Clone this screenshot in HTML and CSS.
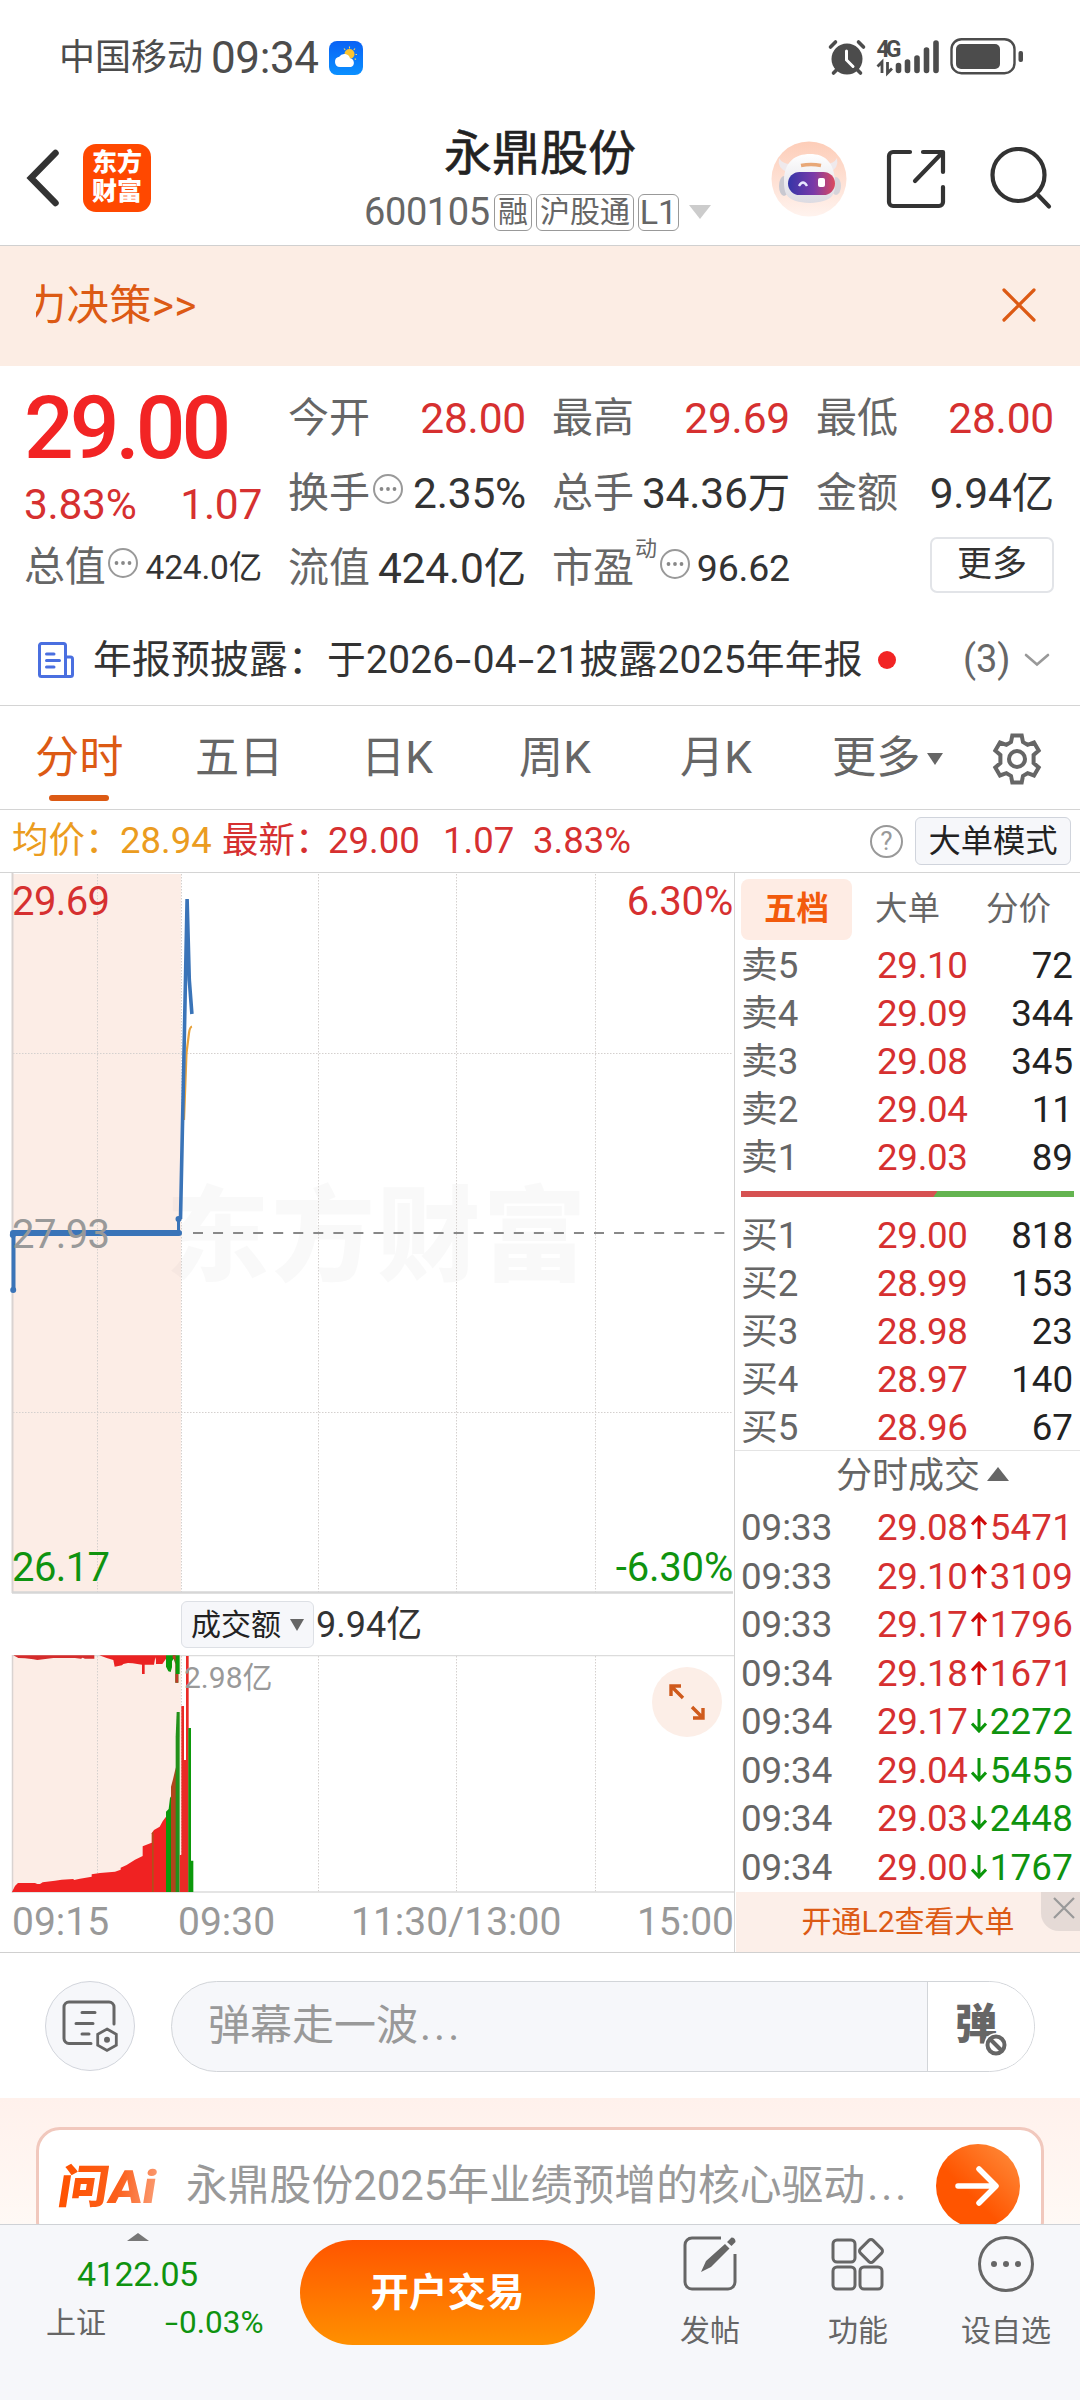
FILE: index.html
```html
<!DOCTYPE html>
<html lang="zh-CN">
<head>
<meta charset="utf-8">
<title>永鼎股份 600105</title>
<link rel="stylesheet" href="styles.css">
</head>
<body>
<svg width="0" height="0" class="defs">
  <defs>
    <symbol id="dots" viewBox="0 0 32 32"><circle cx="16" cy="16" r="14" fill="none" stroke="#999" stroke-width="2"/><circle cx="9.5" cy="16" r="1.9" fill="#888"/><circle cx="16" cy="16" r="1.9" fill="#888"/><circle cx="22.5" cy="16" r="1.9" fill="#888"/></symbol>
    <symbol id="up" viewBox="0 0 16 24"><path d="M8 24V3M1 9.500L8 2l7 7.500" fill="none" stroke="#d00a0a" stroke-width="3"/></symbol>
    <symbol id="down" viewBox="0 0 16 24"><path d="M8 0v21M1 14.500L8 22l7-7.500" fill="none" stroke="#0a960a" stroke-width="3"/></symbol>
  </defs>
</svg>

<div class="status">
  <span class="carrier">中国移动</span><span class="clock">09:34</span>
  <svg class="weather" width="34" height="34" viewBox="0 0 34 34">
    <defs><linearGradient id="sky" x1="0" y1="0" x2="0" y2="1"><stop offset="0" stop-color="#0a62f5"/><stop offset="1" stop-color="#0a90ff"/></linearGradient></defs>
    <rect width="34" height="34" rx="8" fill="url(#sky)"/>
    <circle cx="20.500" cy="13" r="5" fill="#fcc42e"/>
    <path d="M20.500 5.500v2M15 7.500l1.200 1.500M26 7.500L24.800 9M28 13.500h-1.500M27 18.500l-1.300-.8" stroke="#fcd45e" stroke-width="1.100"/>
    <path d="M11 26a5.200 5.200 0 0 1-.8-10.300A6 6 0 0 1 21 17.200a4.600 4.600 0 0 1 1 8.800z" fill="#fff"/>
  </svg>
  <svg class="indicators" width="200" height="52" viewBox="0 -6 200 52">
    <g fill="#4c4c4c" stroke="#4c4c4c" stroke-linecap="round">
      <circle cx="21" cy="21" r="15.500" stroke="none"/>
      <path d="M4.500 9l5-5M37.500 9l-5-5M7.500 35l4-4M34.500 35l-4-4" stroke-width="3.600"/>
      <path d="M20.500 13v9l6.500 6.500" fill="none" stroke="#fff" stroke-width="3"/>
    </g>
    <text x="50.500" y="18.500" class="net" textLength="25">4G</text>
    <path d="M56 35V24l-4.500 4.500M61.500 24v11l4.500-4.500" fill="none" stroke="#4c4c4c" stroke-width="2.800"/>
    <g stroke="#4c4c4c" stroke-width="5.600" stroke-linecap="round"><path d="M72.500 27.500v5M81.500 24v8.500M91 20v12.500M100.500 12v20.500M110 5v27.500"/></g>
    <rect x="125.500" y="1.200" width="63" height="34" rx="10" fill="none" stroke="#4c4c4c" stroke-width="2.400"/>
    <rect x="130" y="6" width="44" height="25" rx="5" fill="#4c4c4c"/>
    <rect x="192.500" y="13" width="4.500" height="11" rx="2" fill="#4c4c4c"/>
  </svg>
</div>

<header class="header">
  <svg class="back" width="34" height="58" viewBox="0 0 34 58"><path d="M29.500 4L5 29l24.500 25" fill="none" stroke="#333" stroke-width="6.500" stroke-linecap="round"/></svg>
  <div class="logo"><span>东方</span><span>财富</span></div>
  <div class="title">
    <h1>永鼎股份</h1>
    <div class="sub"><span class="code">600105</span><i>融</i><i>沪股通</i><i>L1</i><b class="tri"></b></div>
  </div>
  <svg class="robot" width="76" height="76" viewBox="0 0 76 76">
    <defs>
      <linearGradient id="rb" x1="0" y1="0" x2="0" y2="1"><stop offset="0" stop-color="#fdcdb8"/><stop offset="1" stop-color="#fff3ee"/></linearGradient>
      <linearGradient id="rf"><stop offset="0" stop-color="#3536a8"/><stop offset=".55" stop-color="#7a3aa8"/><stop offset="1" stop-color="#dc4a5e"/></linearGradient>
      <linearGradient id="rh" x1="0" y1="0" x2="0" y2="1"><stop offset="0" stop-color="#fff"/><stop offset="1" stop-color="#dcdbe2"/></linearGradient>
    </defs>
    <circle cx="38" cy="38" r="37.500" fill="url(#rb)"/>
    <path d="M8 17q-2 10 8 14l6-8q-10 1-14-6zM66 17q2 10-7 14l-6-8q9 1 13-6z" fill="#efe9ec"/>
    <ellipse cx="13" cy="45" rx="5" ry="10" fill="#c9c8d0"/><ellipse cx="65" cy="45" rx="5" ry="9" fill="#d6d4da"/>
    <path d="M13 40C13 21 24 13 39 13s24 8 25 27c1 14-3 21-25 22-24-1-26-9-26-22z" fill="url(#rh)"/>
    <path d="M30 24.500q10-2 20 0" stroke="#e8a878" stroke-width="3.500" fill="none"/>
    <rect x="17" y="31" width="47" height="23" rx="11.500" fill="url(#rf)"/>
    <path d="M28 45q4-7 8 0" fill="none" stroke="#e8e8ff" stroke-width="2.400"/><rect x="47" y="37" width="7" height="9" rx="2" fill="#fff"/>
  </svg>
  <svg class="share" width="62" height="62" viewBox="0 0 62 62"><path d="M24 4H7a4 4 0 0 0-4 4v46a4 4 0 0 0 4 4h46a4 4 0 0 0 4-4V39M37 4h20v20M56 5L29 33" fill="none" stroke="#333" stroke-width="4.200" stroke-linecap="round" stroke-linejoin="round"/></svg>
  <svg class="search" width="64" height="64" viewBox="0 0 64 64"><circle cx="29.500" cy="28" r="26" fill="none" stroke="#333" stroke-width="4.200"/><path d="M48 47l12 12.500" stroke="#333" stroke-width="4.200" stroke-linecap="round"/></svg>
</header>

<div class="banner">
  <div class="marquee"><span>力决策&gt;&gt;</span></div>
  <svg width="34" height="34" viewBox="0 0 34 34"><path d="M2 2l30 30M32 2L2 32" stroke="#dc5a14" stroke-width="3.200" stroke-linecap="round"/></svg>
</div>

<section class="quote">
  <div class="lead">
    <div class="price">29.00</div>
    <div class="pair chg"><span>3.83%</span><span>1.07</span></div>
    <div class="pair"><label>总值</label><svg class="dot"><use href="#dots"/></svg><span class="v s34">424.0亿</span></div>
  </div>
  <div class="col">
    <div class="pair"><label>今开</label><span class="v red">28.00</span></div>
    <div class="pair"><label>换手</label><svg class="dot"><use href="#dots"/></svg><span class="v">2.35%</span></div>
    <div class="pair"><label>流值</label><span class="v">424.0亿</span></div>
  </div>
  <div class="col">
    <div class="pair"><label>最高</label><span class="v red">29.69</span></div>
    <div class="pair"><label>总手</label><span class="v">34.36万</span></div>
    <div class="pair"><label>市盈</label><sup>动</sup><svg class="dot"><use href="#dots"/></svg><span class="v s38">96.62</span></div>
  </div>
  <div class="col">
    <div class="pair"><label>最低</label><span class="v red">28.00</span></div>
    <div class="pair"><label>金额</label><span class="v">9.94亿</span></div>
    <div class="pair end"><button class="more">更多</button></div>
  </div>
</section>

<div class="news">
  <svg class="doc" width="38" height="38" viewBox="0 0 38 38"><path d="M28.500 35.500H4.500a2 2 0 0 1-2-2V4.500a2 2 0 0 1 2-2h22a2 2 0 0 1 2 2zM28.500 16h5a2 2 0 0 1 2 2v15.500a2 2 0 0 1-2 2h-5M9.500 13h7.500M9.500 19.500h13M9.500 26h7.500" fill="none" stroke="#4a6fe0" stroke-width="3" stroke-linecap="round"/></svg>
  <span class="headline">年报预披露：于2026<u>-</u>04<u>-</u>21披露2025年年报</span><i class="reddot"></i><span class="count">(3)</span>
  <svg class="chev" width="26" height="14" viewBox="0 0 26 14"><path d="M2 2l11 9.500L24 2" fill="none" stroke="#999" stroke-width="2.600" stroke-linecap="round"/></svg>
</div>

<nav class="tabs">
  <span class="t1 on">分时</span><span>五日</span><span>日K</span><span>周K</span><span>月K</span><span>更多</span><b></b>
  <svg class="gear" width="54" height="54" viewBox="0 0 54 54"><path d="M22.300 3.500h9.400l1.300 6.600 4.600 2.700 6.400-2.300 4.700 8.100-5.100 4.400v8l5.100 4.400-4.700 8.100-6.400-2.300-4.600 2.700-1.300 6.600h-9.400L21 43.900l-4.600-2.700-6.400 2.300-4.700-8.100 5.100-4.400v-8l-5.100-4.400 4.700-8.100 6.400 2.300 4.600-2.700z" fill="none" stroke="#666" stroke-width="4"/><circle cx="27" cy="27" r="8" fill="none" stroke="#666" stroke-width="4"/></svg>
</nav>

<div class="info">
  <span class="avg">均价：</span><span class="avg">28.94</span><span class="red">最新：</span><span class="red">29.00</span><span class="red">1.07</span><span class="red">3.83%</span>
  <i class="help">?</i><button class="mode">大单模式</button>
</div>

<main class="board">
  <div class="charts">
    <svg class="pricechart" width="734" height="721" viewBox="0 0 734 721">
      <rect x="13" y="1" width="168" height="718" fill="#fcede6"/>
      <text x="166" y="400" class="mark" textLength="420">东方财富</text>
      <g class="grid"><path d="M97.500 1v718M181.500 1v718M318.500 1v718M456.500 1v718M595.500 1v718M13 180.500h720M13 539.500h720"/></g>
      <path d="M12.500 0v720" stroke="#d9d3d1" stroke-width="2"/>
      <path d="M12 719.500h721" stroke="#d6d6d6" stroke-width="2.500"/>
      <path d="M193 360h540" stroke="#888" stroke-width="2" stroke-dasharray="10 10.050"/>
      <path d="M184 247L186.500 180 189 160Q189.800 154 192 153.500" fill="none" stroke="#e8a23c" stroke-width="2.200"/>
      <g fill="none" stroke="#3a74b8">
        <path d="M13.500 417v-56" stroke-width="4"/><circle cx="13.200" cy="417" r="1.500" stroke-width="3"/><circle cx="12.800" cy="362" r="1.500" stroke-width="3"/>
        <path d="M13 360h166" stroke-width="6" stroke-linecap="round"/>
        <path d="M178.500 360v-14" stroke-width="3"/><circle cx="178.500" cy="346" r="1.500" stroke-width="3"/>
        <path d="M180.500 346L184 180 187.100 26 189.300 107l2.600 34" stroke-width="3.600" stroke-linejoin="bevel"/>
      </g>
      <text x="12" y="42" class="lbl up">29.69</text><text x="733" y="42" class="lbl up r">6.30%</text>
      <text x="12" y="375" class="lbl mid">27.93</text>
      <text x="12" y="708" class="lbl dn">26.17</text><text x="733" y="708" class="lbl dn r">-6.30%</text>
    </svg>
    <div class="volhead"><button>成交额<b></b></button><span>9.94亿</span></div>
    <div class="volwrap">
      <svg class="volchart" width="734" height="238" viewBox="0 0 734 238">
        <rect x="13" y="1" width="168" height="236" fill="#fcede6"/>
        <g class="grid"><path d="M97.500 1v236M181.500 1v236M318.500 1v236M456.500 1v236M595.500 1v236"/></g>
        <path d="M12 .500h722M12 237h722" stroke="#dcdcdc" stroke-width="1.500"/><path d="M12.500 0v238" stroke="#d9d3d1" stroke-width="1.500"/>
        <g transform="translate(0 -75) scale(.33333)">
          <path d="M36 936L45 918 54 909H105L112 912H120L128 907 165 902 185 899 220 897 222 900 240 896 275 890V883L300 879 345 875 362 869V863L380 855 405 839 428 828V799L455 788V760L462 750 479 740 488 724 498 710V936z" fill="#f02222"/>
          <path d="M456 936V760l5-6V936z" fill="#b0501a"/>
          <path d="M498 936V695l8-8 4-33 6-10V936z" fill="#0b990b"/>
          <path d="M513 936V620l6-22 6-26 3-10V936z" fill="#b0451c"/>
          <path d="M527 936V470l3-74h9V936z" fill="#22911a"/>
          <path d="M539 936V825h5V378h8V540h6V228h8V444h0V936z" fill="#ea2a26"/>
          <path d="M565 936V444h8V842h7V936z" fill="#0b990b"/>
          <path d="M40 226H283V236H255L248 233 243 236 225 234H190L160 234 130 238 112 240 100 238 75 235 55 234z" fill="#d52b2b"/>
          <path d="M298 226H498V236L487 252H468V240L466 232 462 254H434V282H426V254L398 250 384 249 370 252 366 256 344 260 340 240 320 234z" fill="#ea2222"/>
          <path d="M498 226H539V282H535V308H526V252L521 236 516 244V262L512 276 505 274 498 260z" fill="#0b990b"/>
          <path d="M518 226h9v56h8v26h-9v-66l-8-8z" fill="#c23a28"/>
        </g>
        <text x="184" y="33" class="vlbl">2.98亿</text>
      </svg>
      <div class="expand"><svg width="38" height="38" viewBox="0 0 38 38"><path d="M3 13V3h10M3 3l12 12M35 25v10H25M35 35L24 24" fill="none" stroke="#cf5a1c" stroke-width="3.400"/></svg></div>
    </div>
    <div class="axis"><span>09:15</span><span>09:30</span><span>11:30/13:00</span><span>15:00</span></div>
  </div>

  <aside class="book">
    <div class="btabs"><span class="on">五档</span><span>大单</span><span>分价</span></div>
    <div class="rows">
      <div class="row"><span>卖5</span><em>29.10</em><b>72</b></div>
      <div class="row"><span>卖4</span><em>29.09</em><b>344</b></div>
      <div class="row"><span>卖3</span><em>29.08</em><b>345</b></div>
      <div class="row"><span>卖2</span><em>29.04</em><b>11</b></div>
      <div class="row"><span>卖1</span><em>29.03</em><b>89</b></div>
    </div>
    <div class="ratio"></div>
    <div class="rows">
      <div class="row"><span>买1</span><em>29.00</em><b>818</b></div>
      <div class="row"><span>买2</span><em>28.99</em><b>153</b></div>
      <div class="row"><span>买3</span><em>28.98</em><b>23</b></div>
      <div class="row"><span>买4</span><em>28.97</em><b>140</b></div>
      <div class="row"><span>买5</span><em>28.96</em><b>67</b></div>
    </div>
    <div class="ticktitle">分时成交<i></i></div>
    <div class="ticks">
      <div class="row"><span>09:33</span><em>29.08</em><svg><use href="#up"/></svg><b class="u">5471</b></div>
      <div class="row"><span>09:33</span><em>29.10</em><svg><use href="#up"/></svg><b class="u">3109</b></div>
      <div class="row"><span>09:33</span><em>29.17</em><svg><use href="#up"/></svg><b class="u">1796</b></div>
      <div class="row"><span>09:34</span><em>29.18</em><svg><use href="#up"/></svg><b class="u">1671</b></div>
      <div class="row"><span>09:34</span><em>29.17</em><svg><use href="#down"/></svg><b class="d">2272</b></div>
      <div class="row"><span>09:34</span><em>29.04</em><svg><use href="#down"/></svg><b class="d">5455</b></div>
      <div class="row"><span>09:34</span><em>29.03</em><svg><use href="#down"/></svg><b class="d">2448</b></div>
      <div class="row"><span>09:34</span><em>29.00</em><svg><use href="#down"/></svg><b class="d">1767</b></div>
    </div>
    <div class="l2">开通L2查看大单<i><svg width="24" height="24" viewBox="0 0 24 24"><path d="M2 2l20 20M22 2L2 22" stroke="#999" stroke-width="2.200"/></svg></i></div>
  </aside>
</main>

<div class="danmu">
  <div class="round"><svg width="58" height="54" viewBox="0 0 58 54"><path d="M30 44.500H8a5 5 0 0 1-5-5V8a5 5 0 0 1 5-5h40a5 5 0 0 1 5 5v17M21 13.500h13M15 24.500h17M21 35h7" fill="none" stroke="#666" stroke-width="3" stroke-linecap="round"/><path d="M46 30l9.300 5.300v10.800L46 51.500l-9.300-5.400V35.300z" fill="none" stroke="#666" stroke-width="2.800"/><circle cx="46" cy="40.800" r="3" fill="#666"/></svg></div>
  <div class="input"><span>弹幕走一波<u>...</u></span><div class="toggle"><em>弹</em><svg width="24" height="24" viewBox="0 0 24 24"><circle cx="12" cy="12" r="12" fill="#fff"/><circle cx="12" cy="12" r="8.500" fill="none" stroke="#666" stroke-width="4"/><path d="M6 6l12 12" stroke="#666" stroke-width="4"/></svg></div></div>
</div>

<div class="ai">
  <div class="aicard">
    <svg class="ailogo" width="116" height="80" viewBox="-4 -15 116 80"><defs><linearGradient id="ag" x1="0" x2="1"><stop offset="0" stop-color="#ff5200"/><stop offset=".6" stop-color="#fb5f1b"/><stop offset="1" stop-color="#fb9a70"/></linearGradient></defs><g transform="skewX(-9)" fill="url(#ag)" class="ait"><text x="6" y="42" textLength="98" lengthAdjust="spacingAndGlyphs">问Ai</text></g></svg>
    <span>永鼎股份2025年业绩预增的核心驱动<u>...</u></span>
    <div class="go"><svg width="46" height="42" viewBox="0 0 46 42"><path d="M3 21h37M24 4l17 17-17 17" fill="none" stroke="#fff" stroke-width="5.500" stroke-linecap="round" stroke-linejoin="round"/></svg></div>
  </div>
</div>

<footer class="bar">
  <div class="index"><b></b><div class="pt">4122.05</div><div class="ln"><span>上证</span><em><u>-</u>0.03%</em></div></div>
  <button class="open">开户交易</button>
  <div class="act a"><svg width="56" height="58" viewBox="0 0 56 58"><path d="M39 3H10a7 7 0 0 0-7 7v37a7 7 0 0 0 7 7h36a7 7 0 0 0 7-7V19" fill="none" stroke="#666" stroke-width="3"/><path d="M19 37l5-11L43 9l4.500 4.500L29 32zM45 7l4.500-4.500q4 0 4 4.500L49.500 11z" fill="#666"/></svg><span>发帖</span></div>
  <div class="act b"><svg width="56" height="58" viewBox="0 0 56 58"><g fill="none" stroke="#666" stroke-width="3"><rect x="3" y="5" width="22" height="22" rx="4"/><rect x="3" y="32" width="22" height="22" rx="4"/><rect x="30" y="32" width="22" height="22" rx="4"/><rect x="32" y="7" width="18" height="18" rx="3" transform="rotate(45 41 16)"/></g></svg><span>功能</span></div>
  <div class="act c"><svg width="58" height="58" viewBox="0 0 58 58"><circle cx="29" cy="29" r="26.500" fill="none" stroke="#666" stroke-width="3"/><circle cx="17" cy="29" r="3" fill="#666"/><circle cx="29" cy="29" r="3" fill="#666"/><circle cx="41" cy="29" r="3" fill="#666"/></svg><span>设自选</span></div>
</footer>
</body>
</html>
```
FILE: styles.css
```css
* { box-sizing: border-box; margin: 0; padding: 0; }
body { width: 1080px; height: 2400px; overflow: hidden; display: flex; flex-direction: column; background: #fff; color: #333; font-family: Roboto, "Noto Sans CJK SC", sans-serif; line-height: 1.2; white-space: nowrap; }
i, em { font-style: normal; }
u { text-decoration: none; }
svg { display: block; flex: none; }
button { font-family: inherit; border: 0; color: inherit; white-space: nowrap; }
.defs { position: absolute; }
.red { color: #d63030; }

.status { height: 115px; flex: none; display: flex; align-items: center; padding-left: 59px; color: #4c4c4c; }
.carrier { font-size: 36px; line-height: 40px; }
.clock { font-size: 44px; line-height: 46px; margin: 1px 0 0 8px; letter-spacing: -.4px; }
.weather { margin-left: 10px; }
.indicators { margin: 0 54px 0 auto; }
.net { font: 700 23px Roboto, sans-serif; fill: #4c4c4c; }

.header { height: 131px; flex: none; display: flex; border-bottom: 1px solid #d0d0d0; }
.back { margin: 34px 0 0 26px; }
.logo { width: 68px; height: 68px; margin: 29px 0 0 23px; border-radius: 13px; background: #ff4800; color: #fff; font-weight: 900; font-size: 25px; line-height: 29px; display: flex; flex-direction: column; align-items: center; padding-top: 4px; }
.title { width: 360px; margin-left: 209px; display: flex; flex-direction: column; }
.title h1 { font-size: 48px; font-weight: 400; -webkit-text-stroke: .6px #222; line-height: 54px; color: #222; margin-top: 12px; text-align: center; }
.sub { display: flex; align-items: center; height: 40px; margin-top: 11px; margin-left: 4px; color: #666; }
.code { font-size: 38px; line-height: 40px; letter-spacing: -.4px; width: 130px; flex: none; }
.sub i { flex: none; border: 1.500px solid #999; border-radius: 6px; height: 37px; line-height: 34px; font-size: 30px; padding: 0 3px; margin-right: 4px; }
.sub i:nth-of-type(3) { font-size: 34px; width: 41px; text-align: center; padding: 0; }
.tri { margin-left: 6px; border: 11px solid transparent; border-top: 14px solid #ccc; border-bottom: 0; }
.robot { margin: 26px 0 0 51px; }
.share { margin: 33px 0 0 39px; }
.search { margin: 32px 0 0 41px; }

.banner { height: 120px; flex: none; background: #fcede4; display: flex; align-items: center; justify-content: space-between; padding: 0 44px 0 36px; color: #dc5a14; }
.banner svg { margin-bottom: 2px; }
.marquee { overflow: hidden; font-size: 42.400px; line-height: 60px; display: flex; letter-spacing: .2px; }
.marquee span { margin-left: -12px; }

.quote { height: 248px; flex: none; display: grid; grid-template-columns: repeat(4, 238px); column-gap: 26px; padding: 15px 24px 0 24px; }
.lead { display: flex; flex-direction: column; }
.lead .price { height: 98px; line-height: 94px; font-size: 87.500px; font-weight: 500; color: #f22424; letter-spacing: -4px; }
.pair { height: 75px; line-height: 75px; display: flex; align-items: center; font-size: 42.500px; }
.lead .pair { letter-spacing: -.3px; }
.lead .chg { height: 51px; line-height: 51px; justify-content: space-between; color: #d63030; }
.pair label { font-size: 41px; color: #666; }
.pair .v { margin-left: auto; letter-spacing: -.2px; }
.pair .s34 { font-size: 33.500px; }
.pair .s38 { font-size: 37.500px; }
.pair sup { font-size: 22px; line-height: 24px; color: #666; align-self: flex-start; margin: 6px 0 0 1px; }
.dot { width: 32px; height: 32px; margin: -9px 0 0 2px; }
.more { width: 124px; height: 56px; margin: -7px 0 0 auto; border: 2px solid #e2e4e8; border-radius: 7px; background: #fff; font-size: 35px; line-height: 46px; }

.news { height: 92px; flex: none; display: flex; align-items: center; border-bottom: 1px solid #d4d4d4; padding-left: 37px; }
.headline { font-size: 38.800px; line-height: 46px; margin-left: 18px; width: 768px; letter-spacing: .22px; }
.headline u, .ln u { display: inline-block; width: .48em; text-align: center; transform: scaleX(1.500); }
.reddot { width: 18px; height: 18px; border-radius: 50%; background: #f22424; margin-left: 17px; }
.count { font-size: 38px; color: #666; margin-left: 67px; width: 61px; }

.tabs { height: 104px; flex: none; display: grid; grid-template-columns: 160px 166px 158px 161px 152px 95px 63px 54px; padding: 0 0 0 35px; border-bottom: 1px solid #d4d4d4; font-size: 44.200px; line-height: 105px; color: #666; align-items: center; }
.tabs .on { color: #dc5a14; position: relative; }
.tabs .on::after { content: ""; position: absolute; left: 14px; top: 89px; width: 60px; height: 6px; border-radius: 3px; background: #dc5a14; }
.tabs b { width: 0; border: 8px solid transparent; border-top: 12px solid #666; border-bottom: 0; }

.info { height: 63px; flex: none; display: grid; grid-template-columns: 108px 102px 106px 115px 90px 337px 45px 157px; align-items: center; border-bottom: 1px solid #d4d4d4; padding-left: 12px; font-size: 36.500px; line-height: 60px; }
.avg { color: #eb9c20; }
.help { width: 33px; height: 33px; border: 2.500px solid #999; border-radius: 50%; font-size: 26px; line-height: 29px; text-align: center; color: #999; }
.mode { width: 156px; height: 48px; background: #f6f7fa; border: 1.500px solid #d0d4dc; border-radius: 6px; font-size: 32.300px; line-height: 42px; color: #222; }

.board { height: 1080px; flex: none; display: flex; border-bottom: 1px solid #d0d0d0; }
.charts { width: 735px; flex: none; border-right: 1.500px solid #d4d4d4; display: flex; flex-direction: column; }
.grid path { stroke: #d4d0ce; stroke-width: 1; stroke-dasharray: 1.500 1.500; }
.mark { font: 900 103px "Noto Sans CJK SC", sans-serif; fill: #777; fill-opacity: .048; }
.lbl { font-size: 40px; letter-spacing: -.6px; }
.lbl.up { fill: #d63030; } .lbl.dn { fill: #0f930f; } .lbl.mid { fill: #999; }
.lbl.r { text-anchor: end; letter-spacing: -.2px; }
.volhead { height: 61px; flex: none; display: flex; align-items: center; padding-left: 181px; font-size: 36px; line-height: 56px; }
.volhead button { width: 133px; height: 47px; background: #f6f7fa; border: 1.500px solid #dde0e5; border-radius: 6px; font-size: 30px; line-height: 40px; display: flex; align-items: center; padding-left: 9px; color: #222; margin-right: 2px; }
.volhead b { margin-left: 9px; border: 7.500px solid transparent; border-top: 12px solid #666; border-bottom: 0; }
.volwrap { position: relative; }
.vlbl { font-size: 30px; fill: #999; }
.expand { position: absolute; left: 652px; top: 12px; width: 70px; height: 70px; border-radius: 50%; background: #fceee7; display: grid; place-items: center; }
.axis { flex: 1; display: grid; grid-template-columns: 166px 173px 1fr auto; align-items: center; padding-left: 12px; font-size: 39px; color: #999; }

.book { flex: 1; display: flex; flex-direction: column; }
.btabs { height: 60px; margin: 6px 6px 3px 6px; display: grid; grid-template-columns: 111px 111px 111px; text-align: center; font-size: 32.500px; line-height: 61px; color: #666; }
.btabs .on { background: #feece4; border-radius: 8px; color: #f25a0c; font-weight: 700; }
.row { height: 48px; display: flex; align-items: center; padding: 0 7px 0 6px; font-size: 36.700px; line-height: 48px; }
.row span { width: 136px; color: #666; }
.row em { width: 93px; color: #d63030; letter-spacing: -.3px; }
.row b { margin-left: auto; font-weight: 400; color: #222; }
.ratio { height: 6px; margin: 9px 6px 15px; background: linear-gradient(125deg, #d65252 58.200%, #64b450 58.400%); }
.ticktitle { height: 58px; margin-top: -2px; border-top: 1px solid #e4e4e4; display: flex; align-items: center; padding-left: 101px; font-size: 36px; color: #666; }
.ticktitle i { margin: -6px 0 0 7px; border: 11px solid transparent; border-bottom: 14px solid #666; border-top: 0; }
.ticks { display: flex; flex-direction: column; padding-top: 1px; }
.ticks .row { height: 48.500px; }
.ticks .row b { letter-spacing: .2px; }
.ticks svg { width: 16px; height: 24px; margin: -2px 0 0 1px; }
.ticks .u { color: #d63030; } .ticks .d { color: #0f930f; }
.l2 { flex: 1; margin-left: 1px; background: #fcefe9; position: relative; text-align: center; font-size: 30px; line-height: 60px; color: #dc5a14; }
.l2 i { position: absolute; right: 0; top: 0; width: 39px; height: 39px; border-bottom-left-radius: 18px; background: #e5dad6; padding: 4px 0 0 11px; }

.danmu { height: 145px; flex: none; display: flex; padding: 28px 45px 0; }
.round { width: 90px; height: 90px; border: 1.500px solid #d2d5dc; border-radius: 50%; background: #f6f7fa; display: grid; place-items: center; }
.input { width: 864px; height: 91px; margin-left: 36px; border: 1.500px solid #d2d5d9; border-radius: 46px; background: #f6f7fa; overflow: hidden; display: flex; align-items: center; justify-content: space-between; padding-left: 36px; font-size: 42px; color: #999; }
.input u, .aicard u { letter-spacing: 3px; margin-left: 2px; }
.toggle { width: 107px; height: 90px; border-left: 1.500px solid #d2d5d9; background: #fff; position: relative; padding-left: 27px; line-height: 86px; color: #666; font-weight: 900; }
.toggle svg { position: absolute; left: 56px; top: 51px; }

.ai { height: 126px; flex: none; overflow: hidden; background: linear-gradient(#fff1ec, #fff9f5); padding: 29px 36px 0; }
.aicard { height: 118px; border: 3px solid #f1c8bd; border-radius: 24px; background: #fff; display: flex; align-items: center; font-size: 41.800px; color: #999; padding-left: 14px; }
.aicard span { margin-left: 17px; width: 750px; }
.ait { font: 900 46px Roboto, "Noto Sans CJK SC", sans-serif; }
.go { width: 84px; height: 84px; border-radius: 50%; background: linear-gradient(45deg, #ff5500 40%, #ff9040); display: grid; place-items: center; flex: none; }

.bar { flex: 1; position: relative; background: #f6f7fa; border-top: 1px solid #cfd2d6; display: flex; align-items: flex-start; }
.index { width: 300px; padding-top: 8px; }
.index b { display: block; width: 22px; margin-left: 127px; border: 11px solid transparent; border-bottom: 8px solid #777; border-top: 0; }
.pt { font-size: 34px; line-height: 40px; margin: 13px 0 0 77px; color: #0f930f; letter-spacing: -.4px; }
.ln { display: flex; align-items: center; font-size: 30px; line-height: 40px; margin: 9px 0 0 46px; color: #666; }
.ln em { margin-left: 58px; font-size: 31.500px; color: #0f930f; }
.open { width: 295px; height: 105px; margin-top: 15px; border-radius: 53px; background: linear-gradient(#ff5500, #ff9000); color: #fff; font-size: 38.500px; line-height: 46px; font-weight: 700; }
.act { display: flex; flex-direction: column; align-items: center; margin-top: 10px; width: 96px; font-size: 30px; color: #666; }
.act span { line-height: 40px; margin-top: 18px; }
.act.a { margin-left: 67px; } .act.b { margin-left: 52px; } .act.c { margin-left: 52px; }
```
